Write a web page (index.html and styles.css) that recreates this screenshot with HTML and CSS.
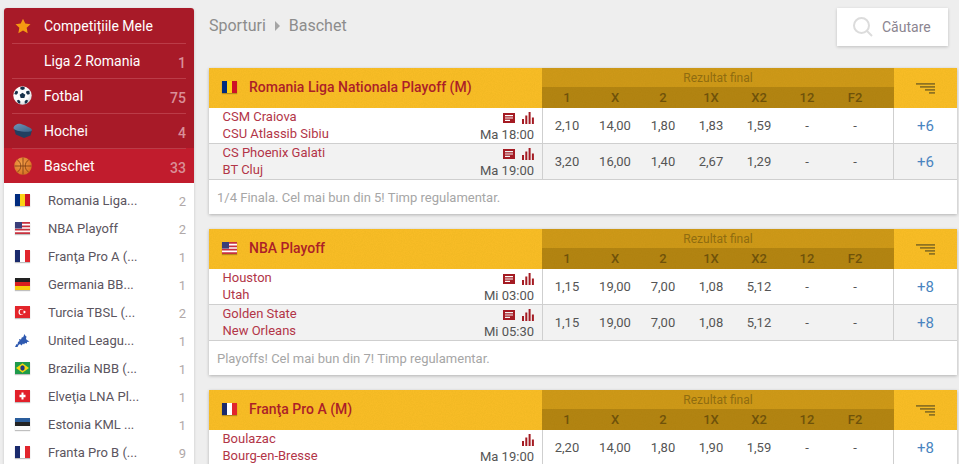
FILE: index.html
```html
<!DOCTYPE html>
<html lang="ro">
<head>
<meta charset="utf-8">
<title>Baschet</title>
<link rel="stylesheet" href="styles.css">
</head>
<body>
<svg class="defs" width="0" height="0" aria-hidden="true">
  <defs>
    <radialGradient id="g-ball" cx=".4" cy=".35" r=".75"><stop offset=".6" stop-color="#fbfbfb"/><stop offset="1" stop-color="#c4cad0"/></radialGradient>
    <radialGradient id="g-bask" cx=".4" cy=".35" r=".75"><stop offset="0" stop-color="#f4a04a"/><stop offset="1" stop-color="#d26c1e"/></radialGradient>
    <linearGradient id="g-puck" x1="0" y1="0" x2="1" y2="1"><stop offset="0" stop-color="#6f95b8"/><stop offset="1" stop-color="#3e6488"/></linearGradient>
  </defs>
  <symbol id="i-news" viewBox="0 0 12 10"><path fill-rule="evenodd" d="M0 0h12v10H0zM2 2v1.200h8V2zM2 4.400v1.200h8V4.400zM2 6.800V8h5V6.800z"/></symbol>
  <symbol id="i-stats" viewBox="0 0 12 12"><path d="M0 7h2v5H0zM3.300 3.500h2V12h-2zM6.600 0h2v12h-2zM9.900 5.500h2V12h-2z"/></symbol>
  <symbol id="i-sort" viewBox="0 0 19 11"><path d="M0 0h19v1.700H0zM4 3h15v1.700H4zM9 6h10v1.700H9zM13 9h6v1.700h-6z"/></symbol>
</svg>
<aside class="sidebar">
  <div class="top-row"><span class="top-ico"><svg width="16" height="16" viewBox="0 0 24 24"><path fill="#f59a12" d="M12 1l3.400 7.300 7.800 1-5.700 5.500 1.500 8L12 18.900l-7 3.900 1.500-8L.8 9.300l7.800-1z"/></svg></span><span class="top-name">Competițiile Mele</span></div>
  <div class="top-row"><span class="top-ico"></span><span class="top-name">Liga 2 Romania</span><span class="top-num">1</span></div>
  <div class="top-row"><span class="top-ico"><svg width="19" height="19" viewBox="0 0 20 20"><circle cx="10" cy="10" r="9.700" fill="url(#g-ball)"/><path fill="#17324a" d="M10 7l3 2.200-1.100 3.500H8.100L7 9.200zM10 .6l2.500 1-.4 1.800L10 4.200 7.900 3.400 7.500 1.600zM2.800 5l2 .3.500 2-1.800 1.800-2.200-.8zM17.200 5l.5 3.300-2.200.8-1.800-1.800.5-2zM4 15.200l2.300-.6 1.500 1.600-.3 2.400-2.200-.8zM16 15.200l-1.300 2.600-2.200.8-.3-2.400 1.500-1.600z"/></svg></span><span class="top-name">Fotbal</span><span class="top-num">75</span></div>
  <div class="top-row"><span class="top-ico"><svg width="19" height="15" viewBox="0 0 19 15"><path fill="#223f60" d="M.8 5l2 6.500L11 15l6.500-2.500L19 7z"/><path fill="url(#g-puck)" d="M.5 5C1 2 5 0 8 1s11 4 11 6-6 2-10 1.500S.5 7 .5 5z"/></svg></span><span class="top-name">Hochei</span><span class="top-num">4</span></div>
  <div class="top-row active"><span class="top-ico"><svg width="18" height="18" viewBox="0 0 20 20"><circle cx="10" cy="10" r="9.700" fill="url(#g-bask)"/><path fill="none" stroke="#7a3d12" stroke-width=".9" d="M10 .5v19M.5 10h19M3.500 3c3 2 4 4.500 4 7s-1 5-4 7M16.500 3c-3 2-4 4.500-4 7s1 5 4 7"/></svg></span><span class="top-name">Baschet</span><span class="top-num">33</span></div>
  <ul class="leagues">
    <li class="league"><svg class="flag" viewBox="0 0 3 2" preserveAspectRatio="none"><path fill="#002b7f" d="M0 0h1v2H0z"/><path fill="#fcd116" d="M1 0h1v2H1z"/><path fill="#ce1126" d="M2 0h1v2H2z"/></svg><span class="league-name">Romania Liga...</span><span class="league-num">2</span></li>
    <li class="league"><svg class="flag" viewBox="0 0 15 10" preserveAspectRatio="none"><path fill="#fff" d="M0 0h15v10H0z"/><path fill="#c8313e" d="M0 0h15v1.400H0zM0 2.900h15v1.400H0zM0 5.700h15v1.400H0zM0 8.600h15V10H0z"/><path fill="#3a3f7a" d="M0 0h7v5.500H0z"/></svg><span class="league-name">NBA Playoff</span><span class="league-num">2</span></li>
    <li class="league"><svg class="flag" viewBox="0 0 3 2" preserveAspectRatio="none"><path fill="#1a2a6c" d="M0 0h1v2H0z"/><path fill="#fff" d="M1 0h1v2H1z"/><path fill="#e1252d" d="M2 0h1v2H2z"/></svg><span class="league-name">Franţa Pro A (...</span><span class="league-num">1</span></li>
    <li class="league"><svg class="flag" viewBox="0 0 3 3" preserveAspectRatio="none"><path fill="#222" d="M0 0h3v1H0z"/><path fill="#d8201f" d="M0 1h3v1H0z"/><path fill="#f8cf0c" d="M0 2h3v1H0z"/></svg><span class="league-name">Germania BB...</span><span class="league-num">1</span></li>
    <li class="league"><svg class="flag" viewBox="0 0 15 10" preserveAspectRatio="none"><path fill="#e3252b" d="M0 0h15v10H0z"/><circle cx="6" cy="5" r="2.500" fill="#fff"/><circle cx="6.700" cy="5" r="2" fill="#e3252b"/><circle cx="9.500" cy="5" r="1" fill="#fff"/></svg><span class="league-name">Turcia TBSL (...</span><span class="league-num">2</span></li>
    <li class="league"><svg class="flag flag-eu" viewBox="0 0 15 13"><path fill="#2e59b0" d="M0 13l1.500-3 1 .5.500-2.500 1.500-1-.5-2 2 .5 1-2.500 1 .5 1.500-3.500 1 2 1 .5-.5 2.500 1 1 2.500 1.500-2.500.5 0 1.500-2-.5-1 1.500-1-1-1.500 2-1.500-1.500-1.500 1-1 2z"/></svg><span class="league-name">United Leagu...</span><span class="league-num">1</span></li>
    <li class="league"><svg class="flag" viewBox="0 0 15 10" preserveAspectRatio="none"><path fill="#1f9a4c" d="M0 0h15v10H0z"/><path fill="#f5d90f" d="M7.500 1L14 5l-6.500 4L1 5z"/><circle cx="7.500" cy="5" r="2.200" fill="#24387f"/></svg><span class="league-name">Brazilia NBB (...</span><span class="league-num">1</span></li>
    <li class="league"><svg class="flag" viewBox="0 0 15 10" preserveAspectRatio="none"><path fill="#e2202a" d="M0 0h15v10H0z"/><path fill="#fff" d="M6.500 2h2v2h2v2h-2v2h-2V6h-2V4h2z"/></svg><span class="league-name">Elveţia LNA Pl...</span><span class="league-num">1</span></li>
    <li class="league"><svg class="flag" viewBox="0 0 3 3" preserveAspectRatio="none"><path fill="#2a5d9c" d="M0 0h3v1H0z"/><path fill="#222" d="M0 1h3v1H0z"/><path fill="#fafafa" d="M0 2h3v1H0z"/></svg><span class="league-name">Estonia KML ...</span><span class="league-num">1</span></li>
    <li class="league"><svg class="flag" viewBox="0 0 3 2" preserveAspectRatio="none"><path fill="#1a2a6c" d="M0 0h1v2H0z"/><path fill="#fff" d="M1 0h1v2H1z"/><path fill="#e1252d" d="M2 0h1v2H2z"/></svg><span class="league-name">Franta Pro B (...</span><span class="league-num">9</span></li>
  </ul>
</aside>
<main class="main">
  <header class="topbar">
    <div class="crumbs"><span>Sporturi</span><span class="crumb-arrow"></span><span>Baschet</span></div>
    <div class="search"><svg width="20" height="20" viewBox="0 0 20 20"><circle cx="8.500" cy="8.500" r="7.500" fill="none" stroke="#dcdcdc" stroke-width="2"/><path stroke="#dcdcdc" stroke-width="2" d="M14 14l5 5"/></svg><span>Căutare</span></div>
  </header>

  <section class="card">
    <div class="card-head">
      <div class="title"><svg class="flag flag-title" viewBox="0 0 3 2" preserveAspectRatio="none"><path fill="#002b7f" d="M0 0h1v2H0z"/><path fill="#fcd116" d="M1 0h1v2H1z"/><path fill="#ce1126" d="M2 0h1v2H2z"/></svg>Romania Liga Nationala Playoff (M)</div>
      <div class="market"><div class="market-name">Rezultat final</div><div class="market-cols"><span>1</span><span>X</span><span>2</span><span>1X</span><span>X2</span><span>12</span><span>F2</span></div></div>
      <div class="sort"><svg width="19" height="11"><use href="#i-sort"/></svg></div>
    </div>
    <div class="match">
      <div class="teams"><div>CSM Craiova</div><div>CSU Atlassib Sibiu</div></div>
      <div class="meta"><div class="icons"><svg class="ic-news"><use href="#i-news"/></svg><svg class="ic-stats"><use href="#i-stats"/></svg></div><div class="time">Ma 18:00</div></div>
      <div class="odds"><span>2,10</span><span>14,00</span><span>1,80</span><span>1,83</span><span>1,59</span><span>-</span><span>-</span></div>
      <div class="more">+6</div>
    </div>
    <div class="match alt">
      <div class="teams"><div>CS Phoenix Galati</div><div>BT Cluj</div></div>
      <div class="meta"><div class="icons"><svg class="ic-news"><use href="#i-news"/></svg><svg class="ic-stats"><use href="#i-stats"/></svg></div><div class="time">Ma 19:00</div></div>
      <div class="odds"><span>3,20</span><span>16,00</span><span>1,40</span><span>2,67</span><span>1,29</span><span>-</span><span>-</span></div>
      <div class="more">+6</div>
    </div>
    <div class="note">1/4 Finala. Cel mai bun din 5! Timp regulamentar.</div>
  </section>

  <section class="card">
    <div class="card-head">
      <div class="title"><svg class="flag flag-title" viewBox="0 0 15 10" preserveAspectRatio="none"><path fill="#fff" d="M0 0h15v10H0z"/><path fill="#c8313e" d="M0 0h15v1.400H0zM0 2.900h15v1.400H0zM0 5.700h15v1.400H0zM0 8.600h15V10H0z"/><path fill="#3a3f7a" d="M0 0h7v5.500H0z"/></svg>NBA Playoff</div>
      <div class="market"><div class="market-name">Rezultat final</div><div class="market-cols"><span>1</span><span>X</span><span>2</span><span>1X</span><span>X2</span><span>12</span><span>F2</span></div></div>
      <div class="sort"><svg width="19" height="11"><use href="#i-sort"/></svg></div>
    </div>
    <div class="match">
      <div class="teams"><div>Houston</div><div>Utah</div></div>
      <div class="meta"><div class="icons"><svg class="ic-news"><use href="#i-news"/></svg><svg class="ic-stats"><use href="#i-stats"/></svg></div><div class="time">Mi 03:00</div></div>
      <div class="odds"><span>1,15</span><span>19,00</span><span>7,00</span><span>1,08</span><span>5,12</span><span>-</span><span>-</span></div>
      <div class="more">+8</div>
    </div>
    <div class="match alt">
      <div class="teams"><div>Golden State</div><div>New Orleans</div></div>
      <div class="meta"><div class="icons"><svg class="ic-news"><use href="#i-news"/></svg><svg class="ic-stats"><use href="#i-stats"/></svg></div><div class="time">Mi 05:30</div></div>
      <div class="odds"><span>1,15</span><span>19,00</span><span>7,00</span><span>1,08</span><span>5,12</span><span>-</span><span>-</span></div>
      <div class="more">+8</div>
    </div>
    <div class="note">Playoffs! Cel mai bun din 7! Timp regulamentar.</div>
  </section>

  <section class="card">
    <div class="card-head">
      <div class="title"><svg class="flag flag-title" viewBox="0 0 3 2" preserveAspectRatio="none"><path fill="#1a2a6c" d="M0 0h1v2H0z"/><path fill="#fff" d="M1 0h1v2H1z"/><path fill="#e1252d" d="M2 0h1v2H2z"/></svg>Franţa Pro A (M)</div>
      <div class="market"><div class="market-name">Rezultat final</div><div class="market-cols"><span>1</span><span>X</span><span>2</span><span>1X</span><span>X2</span><span>12</span><span>F2</span></div></div>
      <div class="sort"><svg width="19" height="11"><use href="#i-sort"/></svg></div>
    </div>
    <div class="match">
      <div class="teams"><div>Boulazac</div><div>Bourg-en-Bresse</div></div>
      <div class="meta"><div class="icons"><svg class="ic-stats"><use href="#i-stats"/></svg></div><div class="time">Ma 19:00</div></div>
      <div class="odds"><span>2,20</span><span>14,00</span><span>1,80</span><span>1,90</span><span>1,59</span><span>-</span><span>-</span></div>
      <div class="more">+8</div>
    </div>
  </section>
</main>
</body>
</html>
```
FILE: styles.css
```css
* { box-sizing: border-box; }
html, body { height: 100%; }
body {
  margin: 0;
  height: 464px;
  overflow: hidden;
  display: flex;
  align-items: flex-start;
  background: #eeeeee;
  font-family: Roboto, "Liberation Sans", sans-serif;
  font-size: 13px;
  color: #555;
}
.defs { position: absolute; }

.sidebar {
  flex: 0 0 190px;
  margin: 8px 0 0 4px;
  background: #fff;
  border-radius: 3px 3px 0 0;
  box-shadow: 0 1px 3px rgba(0,0,0,.18);
  overflow: hidden;
}
.top-row {
  height: 35px;
  display: flex;
  align-items: center;
  background: #a81a28;
  color: #fff;
  font-size: 14px;
  position: relative;
  padding: 0 8px 0 9px;
}
.top-row:not(.active)::after {
  content: "";
  position: absolute;
  z-index: 1;
  left: 8px;
  right: 8px;
  bottom: -1px;
  height: 1px;
  background: #bb3c48;
}
.top-row.active { background: #c11c2d; }
.top-ico { flex: 0 0 31px; display: flex; justify-content: center; padding-right: 12px; }
.top-name { flex: 1; }
.top-num { font-size: 14px; font-weight: 500; color: #d98f98; margin-top: 5px; }

.leagues { list-style: none; margin: 0; padding: 3px 0 0; }
.league {
  height: 28px;
  display: flex;
  align-items: center;
  padding: 0 8px 0 11px;
  color: #5b5560;
  font-size: 13px;
}
.flag { width: 15px; height: 12px; flex: none; box-shadow: 0 1px 1px rgba(0,0,0,.25); }
.flag-eu { box-shadow: none; height: 13px; }
.league-name { flex: 1; margin-left: 18px; }
.league-num { color: #b0a8a8; font-size: 13px; margin-top: 3px; }

.main { flex: 1; min-width: 0; margin-left: 15px; margin-right: 2px; }
.topbar {
  height: 60px;
  display: flex;
  justify-content: space-between;
  align-items: flex-start;
}
.crumbs { display: flex; align-items: center; gap: 9px; font-size: 16px; color: #8c8c8c; padding-top: 16px; }
.crumb-arrow { width: 0; height: 0; border-left: 5px solid #a5a5a5; border-top: 5px solid transparent; border-bottom: 5px solid transparent; }
.search {
  width: 111px;
  height: 38px;
  margin-top: 8px;
  margin-right: 9px;
  background: #fff;
  box-shadow: 0 1px 3px rgba(0,0,0,.2);
  display: flex;
  align-items: center;
  gap: 9px;
  padding-left: 16px;
  font-size: 14px;
  color: #8b8590;
}

.card {
  background: #fff;
  box-shadow: 0 1px 3px rgba(0,0,0,.25);
  margin: 8px 0 15px;
}
.card-head {
  height: 40px;
  display: flex;
  background-color: #f8bc26;
  background-image: url("data:image/svg+xml,%3Csvg xmlns='http://www.w3.org/2000/svg' width='200' height='60'%3E%3Cfilter id='n'%3E%3CfeTurbulence type='fractalNoise' baseFrequency='.9' numOctaves='2'/%3E%3CfeColorMatrix values='0 0 0 0 .45 0 0 0 0 .3 0 0 0 0 0 0 0 0 .7 -.2'/%3E%3C/filter%3E%3Crect width='200' height='60' filter='url(%23n)' opacity='.25'/%3E%3C/svg%3E");
}
.title {
  width: 333px;
  display: flex;
  align-items: center;
  padding: 0 0 2px 13px;
  font-size: 14px;
  font-weight: 500;
  color: #ac1f28;
}
.flag-title { margin-right: 12px; width: 15px; height: 12px; }
.market { width: 352px; flex: none; background: rgba(130,90,0,.36); color: #8f6c10; }
.market-name { height: 19px; line-height: 20px; text-align: center; font-size: 12px; }
.market-cols { height: 21px; padding-left: 1px; display: flex; background: rgba(100,70,0,.25); font-weight: 500; font-size: 13px; color: #6f520a; }
.market-cols span { width: 48px; text-align: center; line-height: 22px; }
.sort { flex: 1; display: flex; justify-content: center; padding-top: 15px; }
.sort svg { fill: #8f7322; }

.match { height: 36px; display: flex; border-bottom: 1px solid #cfcfcf; background: #fff; }
.match.alt { background: #f2f2f2; }
.teams { width: 240px; padding: 0 0 0 13.5px; color: #b23548; font-size: 13px; line-height: 17px; }
.meta { width: 93px; padding: 3px 8px 0 0; display: flex; flex-direction: column; align-items: flex-end; }
.icons { display: flex; gap: 7px; height: 13px; align-items: center; fill: #a41b23; }
.ic-news { width: 12px; height: 10px; }
.ic-stats { width: 12px; height: 12px; }
.time { font-size: 13px; line-height: 15px; margin-top: 3px; color: #555; }
.odds { width: 352px; flex: none; display: flex; align-items: center; border-left: 1px solid #cfcfcf; border-right: 1px solid #cfcfcf; font-size: 13px; color: #555; }
.odds span { width: 48px; text-align: center; }
.more { flex: 1; display: flex; align-items: center; justify-content: center; font-size: 15px; color: #4a84c0; }
.note { height: 34px; padding-left: 8px; display: flex; align-items: center; font-size: 13px; color: #a6a6a6; }
```
